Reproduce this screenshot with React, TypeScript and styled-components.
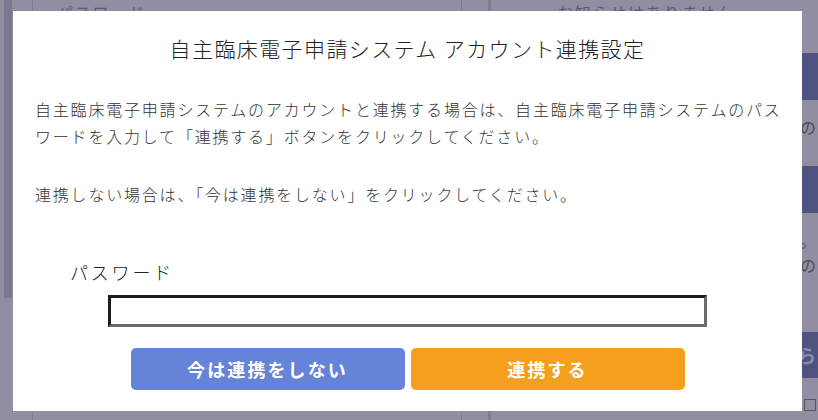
import styled, { createGlobalStyle } from "styled-components";

const GlobalStyle = createGlobalStyle`
  html, body {
    margin: 0;
    padding: 0;
    background: #908ea0;
  }
  * {
    box-sizing: border-box;
  }
`;

const Page = styled.div`
  position: relative;
  width: 818px;
  height: 420px;
  overflow: hidden;
  background: #908ea0;
  font-family: "Noto Sans CJK JP", "Noto Sans", sans-serif;
`;

/* background page (under the overlay) */
const Backdrop = styled.div`
  display: flex;
  height: 100%;
`;

const LeftRail = styled.div`
  flex: 0 0 33px;
  border-right: 1px solid #7e7c90;
  padding-left: 4px;
`;

const RailBar = styled.div`
  width: 8px;
  height: 298px;
  background: #7a788f;
`;

const LeftPanel = styled.div`
  flex: 0 0 429px;
  border-right: 1px solid #7e7c90;
  padding-left: 24px;
`;

const Gutter = styled.div`
  flex: 0 0 26px;
`;

const RightPanel = styled.div`
  flex: 1;
  display: flex;
  flex-direction: column;
  border-left: 3px solid #7e7c90;
`;

const FaintText = styled.div`
  margin-top: 2px;
  font-size: 16px;
  line-height: 20px;
  letter-spacing: 1.8px;
  color: #5c5a6c;
`;

const NoticeSlot = styled.div`
  height: 53px;
  padding-left: 66px;
`;

const Band = styled.div<{ $h: number }>`
  height: ${(p) => p.$h}px;
  background: #4f5382;
  color: #8a8db0;
  font-size: 18px;
  font-weight: 700;
  text-align: right;
  line-height: ${(p) => p.$h}px;
  padding-right: 2px;
`;

const Spacer = styled.div<{ $h: number }>`
  height: ${(p) => p.$h}px;
`;

const TextLine = styled.div<{ $h: number }>`
  height: ${(p) => p.$h}px;
  line-height: ${(p) => p.$h}px;
  text-align: right;
  font-size: 16px;
  color: #4c4a5c;
  padding-right: 2px;
  overflow: hidden;
`;

const Checkbox = styled.span`
  display: inline-block;
  width: 12px;
  height: 12px;
  margin-top: 6px;
  border: 1px solid #55536a;
  vertical-align: middle;
`;

/* modal */
const Modal = styled.div`
  position: absolute;
  top: 11px;
  left: 13px;
  width: 789px;
  height: 400px;
  background: #ffffff;
  display: flex;
  flex-direction: column;
  padding: 22px 16px 0 22px;
  color: #333333;
`;

const Title = styled.h2`
  margin: 0 6px 0 0;
  font-size: 21px;
  font-weight: 300;
  letter-spacing: 1.4px;
  line-height: 30px;
  text-align: center;
  color: #222222;
`;

const Paragraph = styled.p<{ $top: number }>`
  margin: ${(p) => p.$top}px 0 0;
  font-size: 16px;
  font-weight: 300;
  letter-spacing: 1.8px;
  line-height: 27px;
`;

const Label = styled.label`
  display: block;
  margin: 51px 0 0 35px;
  font-size: 18px;
  font-weight: 300;
  letter-spacing: 2.8px;
  line-height: 27px;
  color: #222222;
`;

const PasswordInput = styled.input`
  display: block;
  align-self: center;
  margin: 9px 6px 0 0;
  width: 599px;
  height: 32px;
  border-style: solid;
  border-width: 3px;
  border-color: #1c1c1c #6a6a6a #6a6a6a #1c1c1c;
  background: #ffffff;
  outline: none;
`;

const ButtonRow = styled.div`
  display: flex;
  justify-content: center;
  gap: 6px;
  margin: 21px 6px 0 0;
`;

const ActionButton = styled.button<{ $tone: "blue" | "orange" }>`
  width: 274px;
  height: 42px;
  border: none;
  border-radius: 5px;
  background: ${(p) => (p.$tone === "blue" ? "#6583d8" : "#f59f1f")};
  color: #ffffff;
  font-family: "Noto Sans CJK JP", "Noto Sans", sans-serif;
  font-size: 18px;
  font-weight: 700;
  letter-spacing: 2.1px;
  cursor: pointer;
`;

export default function App() {
  return (
    <Page>
      <GlobalStyle />
      <Backdrop>
        <LeftRail>
          <RailBar />
        </LeftRail>
        <LeftPanel>
          <FaintText>パスワード</FaintText>
        </LeftPanel>
        <Gutter />
        <RightPanel>
          <NoticeSlot>
            <FaintText>お知らせはありません</FaintText>
          </NoticeSlot>
          <Band $h={47} />
          <Spacer $h={15} />
          <TextLine $h={24}>お知らせの</TextLine>
          <Spacer $h={27} />
          <Band $h={47} />
          <Spacer $h={15} />
          <TextLine $h={24}>ます。</TextLine>
          <TextLine $h={26}>お知らせの</TextLine>
          <Spacer $h={54} />
          <Band $h={46}>ら</Band>
          <TextLine $h={42}>
            <Checkbox />
          </TextLine>
        </RightPanel>
      </Backdrop>

      <Modal role="dialog">
        <Title>自主臨床電子申請システム アカウント連携設定</Title>
        <Paragraph $top={33}>
          自主臨床電子申請システムのアカウントと連携する場合は、自主臨床電子申請システムのパスワードを入力して「連携する」ボタンをクリックしてください。
        </Paragraph>
        <Paragraph $top={31}>
          連携しない場合は、「今は連携をしない」をクリックしてください。
        </Paragraph>
        <Label htmlFor="pw">パスワード</Label>
        <PasswordInput id="pw" type="password" />
        <ButtonRow>
          <ActionButton $tone="blue">今は連携をしない</ActionButton>
          <ActionButton $tone="orange">連携する</ActionButton>
        </ButtonRow>
      </Modal>
    </Page>
  );
}
